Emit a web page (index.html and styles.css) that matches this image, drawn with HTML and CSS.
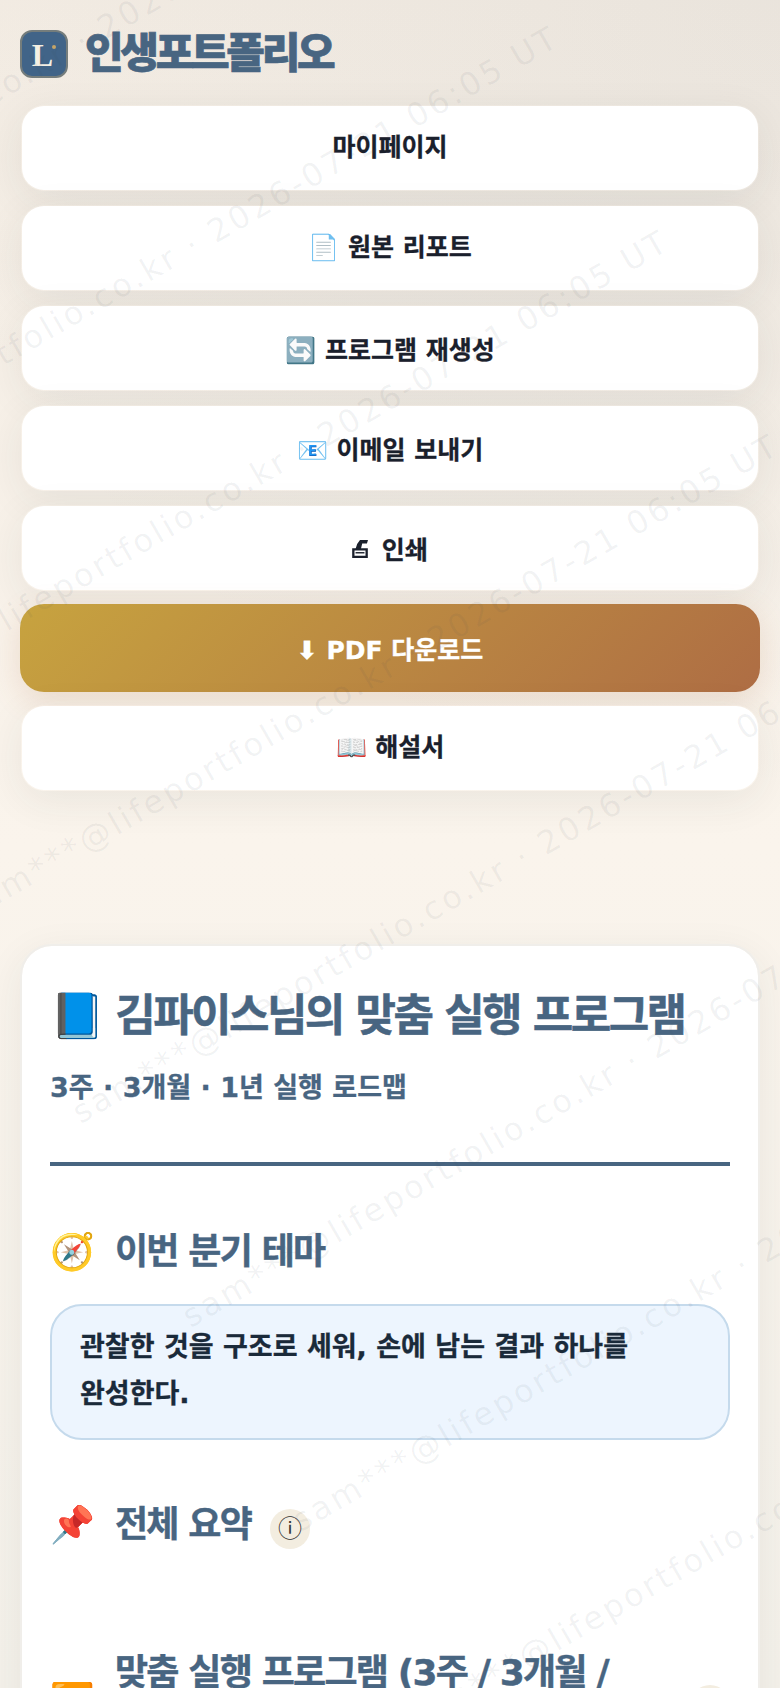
FILE: index.html
```html
<!DOCTYPE html>
<html lang="ko">
<head>
<meta charset="utf-8">
<title>인생포트폴리오</title>
<link rel="stylesheet" href="styles.css">
</head>
<body>
<header class="brand">
  <div class="logo"><span class="logo-l">L</span><i class="logo-dot"></i></div>
  <div class="brand-name">인생포트폴리오</div>
</header>
<nav class="actions">
  <a class="btn btn-up">마이페이지</a>
  <a class="btn btn-up">📄 원본 리포트</a>
  <a class="btn">🔄 프로그램 재생성</a>
  <a class="btn">📧 이메일 보내기</a>
  <a class="btn"><svg class="printer" viewBox="0 0 18 21" aria-hidden="true"><path d="M1.500 11.500h15v8.500h-15z" fill="none" stroke="currentColor" stroke-width="2.600"/><path d="M4 14.500h10v1.600H4z" fill="currentColor"/><path d="M4 11l1.800-5.500L9 1H18L16.800 5H11.500L10 11z" fill="currentColor"/></svg> 인쇄</a>
  <a class="btn btn-primary">⬇ PDF 다운로드</a>
  <a class="btn btn-up">📖 해설서</a>
</nav>
<main class="card">
  <h1 class="title">📘 김파이스님의 맞춤 실행 프로그램</h1>
  <p class="subtitle">3주 · 3개월 · 1년 실행 로드맵</p>
  <hr class="rule">
  <h2 class="section"><span class="sec-icon">🧭</span><span>이번 분기 테마</span></h2>
  <div class="theme">관찰한 것을 구조로 세워, 손에 남는 결과 하나를 완성한다.</div>
  <h2 class="section section-summary"><span class="sec-icon">📌</span><span>전체 요약</span><span class="info">ⓘ</span></h2>
  <h2 class="section section-program"><span class="sec-icon">🟧</span><span class="sec-text">맞춤 실행 프로그램 (3주 / 3개월 / 1년)</span><span class="info">ⓘ</span></h2>
</main>
<div class="wm" aria-hidden="true">
  <span class="wm-line l0">sam***@lifeportfolio.co.kr · 2026-07-21 06:05 UT</span>
  <span class="wm-line l1">sam***@lifeportfolio.co.kr · 2026-07-21 06:05 UT</span>
  <span class="wm-line l2">sam***@lifeportfolio.co.kr · 2026-07-21 06:05 UT</span>
  <span class="wm-line l3">sam***@lifeportfolio.co.kr · 2026-07-21 06:05 UT</span>
  <span class="wm-line l4">sam***@lifeportfolio.co.kr · 2026-07-21 06:05 UT</span>
  <span class="wm-line l5">sam***@lifeportfolio.co.kr · 2026-07-21 06:05 UT</span>
  <span class="wm-line l6">sam***@lifeportfolio.co.kr · 2026-07-21 06:05 UT</span>
  <span class="wm-line l7">sam***@lifeportfolio.co.kr · 2026-07-21 06:05 UT</span>
</div>
</body>
</html>
```
FILE: styles.css
```css
* { box-sizing: border-box; }
html, body { margin: 0; height: 1688px; overflow: hidden; }
body {
  position: relative;
  padding: 30px 20px 0;
  background:
    radial-gradient(ellipse 900px 800px at 100% 0, rgba(110, 120, 130, .07), rgba(110, 120, 130, 0)),
    linear-gradient(180deg, #f3ece3 0%, #faf4ec 50%, #f4f1ea 100%);
  font-family: "DejaVu Sans", "Noto Sans CJK KR", sans-serif;
  color: #1a202c;
}
.brand { display: flex; align-items: center; gap: 17px; height: 48px; }
.logo {
  position: relative;
  flex: none;
  width: 48px; height: 48px;
  border-radius: 12px;
  border: 2px solid #757d7c;
  background: #416488;
  display: flex; align-items: center; justify-content: center;
}
.logo-l {
  font: bold 32px "Liberation Serif", serif;
  color: #f4efe3;
  margin-left: -3px;
  margin-top: 2px;
}
.logo-dot {
  position: absolute; top: 13px; right: 10px;
  width: 4px; height: 4px; border-radius: 50%;
  background: #c5a467;
}
.brand-name {
  font-size: 42px; font-weight: 900; color: #486581; line-height: 48px;
  letter-spacing: -3.300px;
  -webkit-text-stroke: .7px #486581;
}
.actions { display: flex; flex-direction: column; gap: 12px; margin-top: 26px; }
.btn {
  height: 88px;
  display: flex; align-items: center; justify-content: center;
  white-space: pre;
  border: 2px solid transparent;
  background: #fff padding-box;
  border-radius: 24px;
  font-size: 25px; font-weight: 700;
  color: #1a202c;
  -webkit-text-stroke: .3px currentColor;
  box-shadow: 0 10px 40px rgba(40, 50, 60, .07);
}
.btn-up { padding-bottom: 6px; }
.printer { width: 16px; height: 21px; margin-right: 5px; }
.btn-primary {
  border: 0;
  background: linear-gradient(135deg, #c7a33f 0%, #ae6d44 100%);
  color: #fff;
  box-shadow: 0 8px 30px rgba(176, 110, 67, .18);
}
.card {
  margin-top: 152px;
  height: 800px;
  padding: 28px 28px 0;
  border: 2px solid #f0eeea;
  border-radius: 32px;
  background: #fff padding-box;
  box-shadow: 0 10px 40px rgba(40, 50, 60, .07);
}
.title {
  margin: 10px 0 0;
  font-size: 44px; font-weight: 700; color: #486581; line-height: 64px;
  letter-spacing: -2.550px; white-space: nowrap;
  -webkit-text-stroke: .5px #486581;
}
.subtitle {
  margin: 20px 0 0;
  font-size: 27px; font-weight: 700; color: #486581; line-height: 40px;
  -webkit-text-stroke: .3px #486581;
}
.rule { margin: 54px 0 0; height: 4px; border: 0; background: #486581; }
.section {
  display: flex; align-items: center; gap: 21px;
  margin: 61px 0 0;
  font-size: 36px; font-weight: 700; color: #486581; line-height: 50px;
  letter-spacing: -1.800px;
  -webkit-text-stroke: .4px #486581;
}
.sec-icon { flex: none; width: 44px; text-align: center; letter-spacing: 0; }
.theme {
  margin-top: 27px;
  padding: 17px 28px 21px;
  border: 2px solid #c5daec;
  border-radius: 32px;
  background: #edf5fe;
  font-size: 27px; font-weight: 700; line-height: 47px;
  color: #1a2a3a;
  -webkit-text-stroke: .3px #1a2a3a;
  word-break: keep-all;
}
.section-summary { margin-top: 60px; }
.info {
  flex: none; width: 40px; height: 40px; margin: 7px 0 0 -2px;
  border-radius: 50%;
  background: #f3ede0;
  color: #333;
  font-size: 24px; font-weight: 400; line-height: 40px;
  letter-spacing: 0;
  -webkit-text-stroke: 0;
  text-align: center;
}
.section-program { margin-top: 87px; line-height: 72px; }
.section-program .sec-icon { margin-bottom: 14px; line-height: 50px; }
.section-program .info { margin: -8px 0 0; line-height: 40px; }
.sec-text { flex: 1; word-break: keep-all; }
.wm { position: absolute; inset: 0; overflow: hidden; pointer-events: none; }
.wm-line {
  position: absolute;
  height: 40px;
  white-space: nowrap;
  font-size: 32px; line-height: 40px;
  letter-spacing: 3.050px;
  color: rgba(60, 70, 85, .065);
  transform: rotate(-30deg);
  transform-origin: 0 100%;
}
.l0 { left: -355px; top: 276px; }
.l1 { left: -245px; top: 480px; }
.l2 { left: -135px; top: 684px; }
.l3 { left: -25px; top: 888px; }
.l4 { left: 85px; top: 1092px; }
.l5 { left: 195px; top: 1296px; }
.l6 { left: 305px; top: 1500px; }
.l7 { left: 415px; top: 1704px; }
```
